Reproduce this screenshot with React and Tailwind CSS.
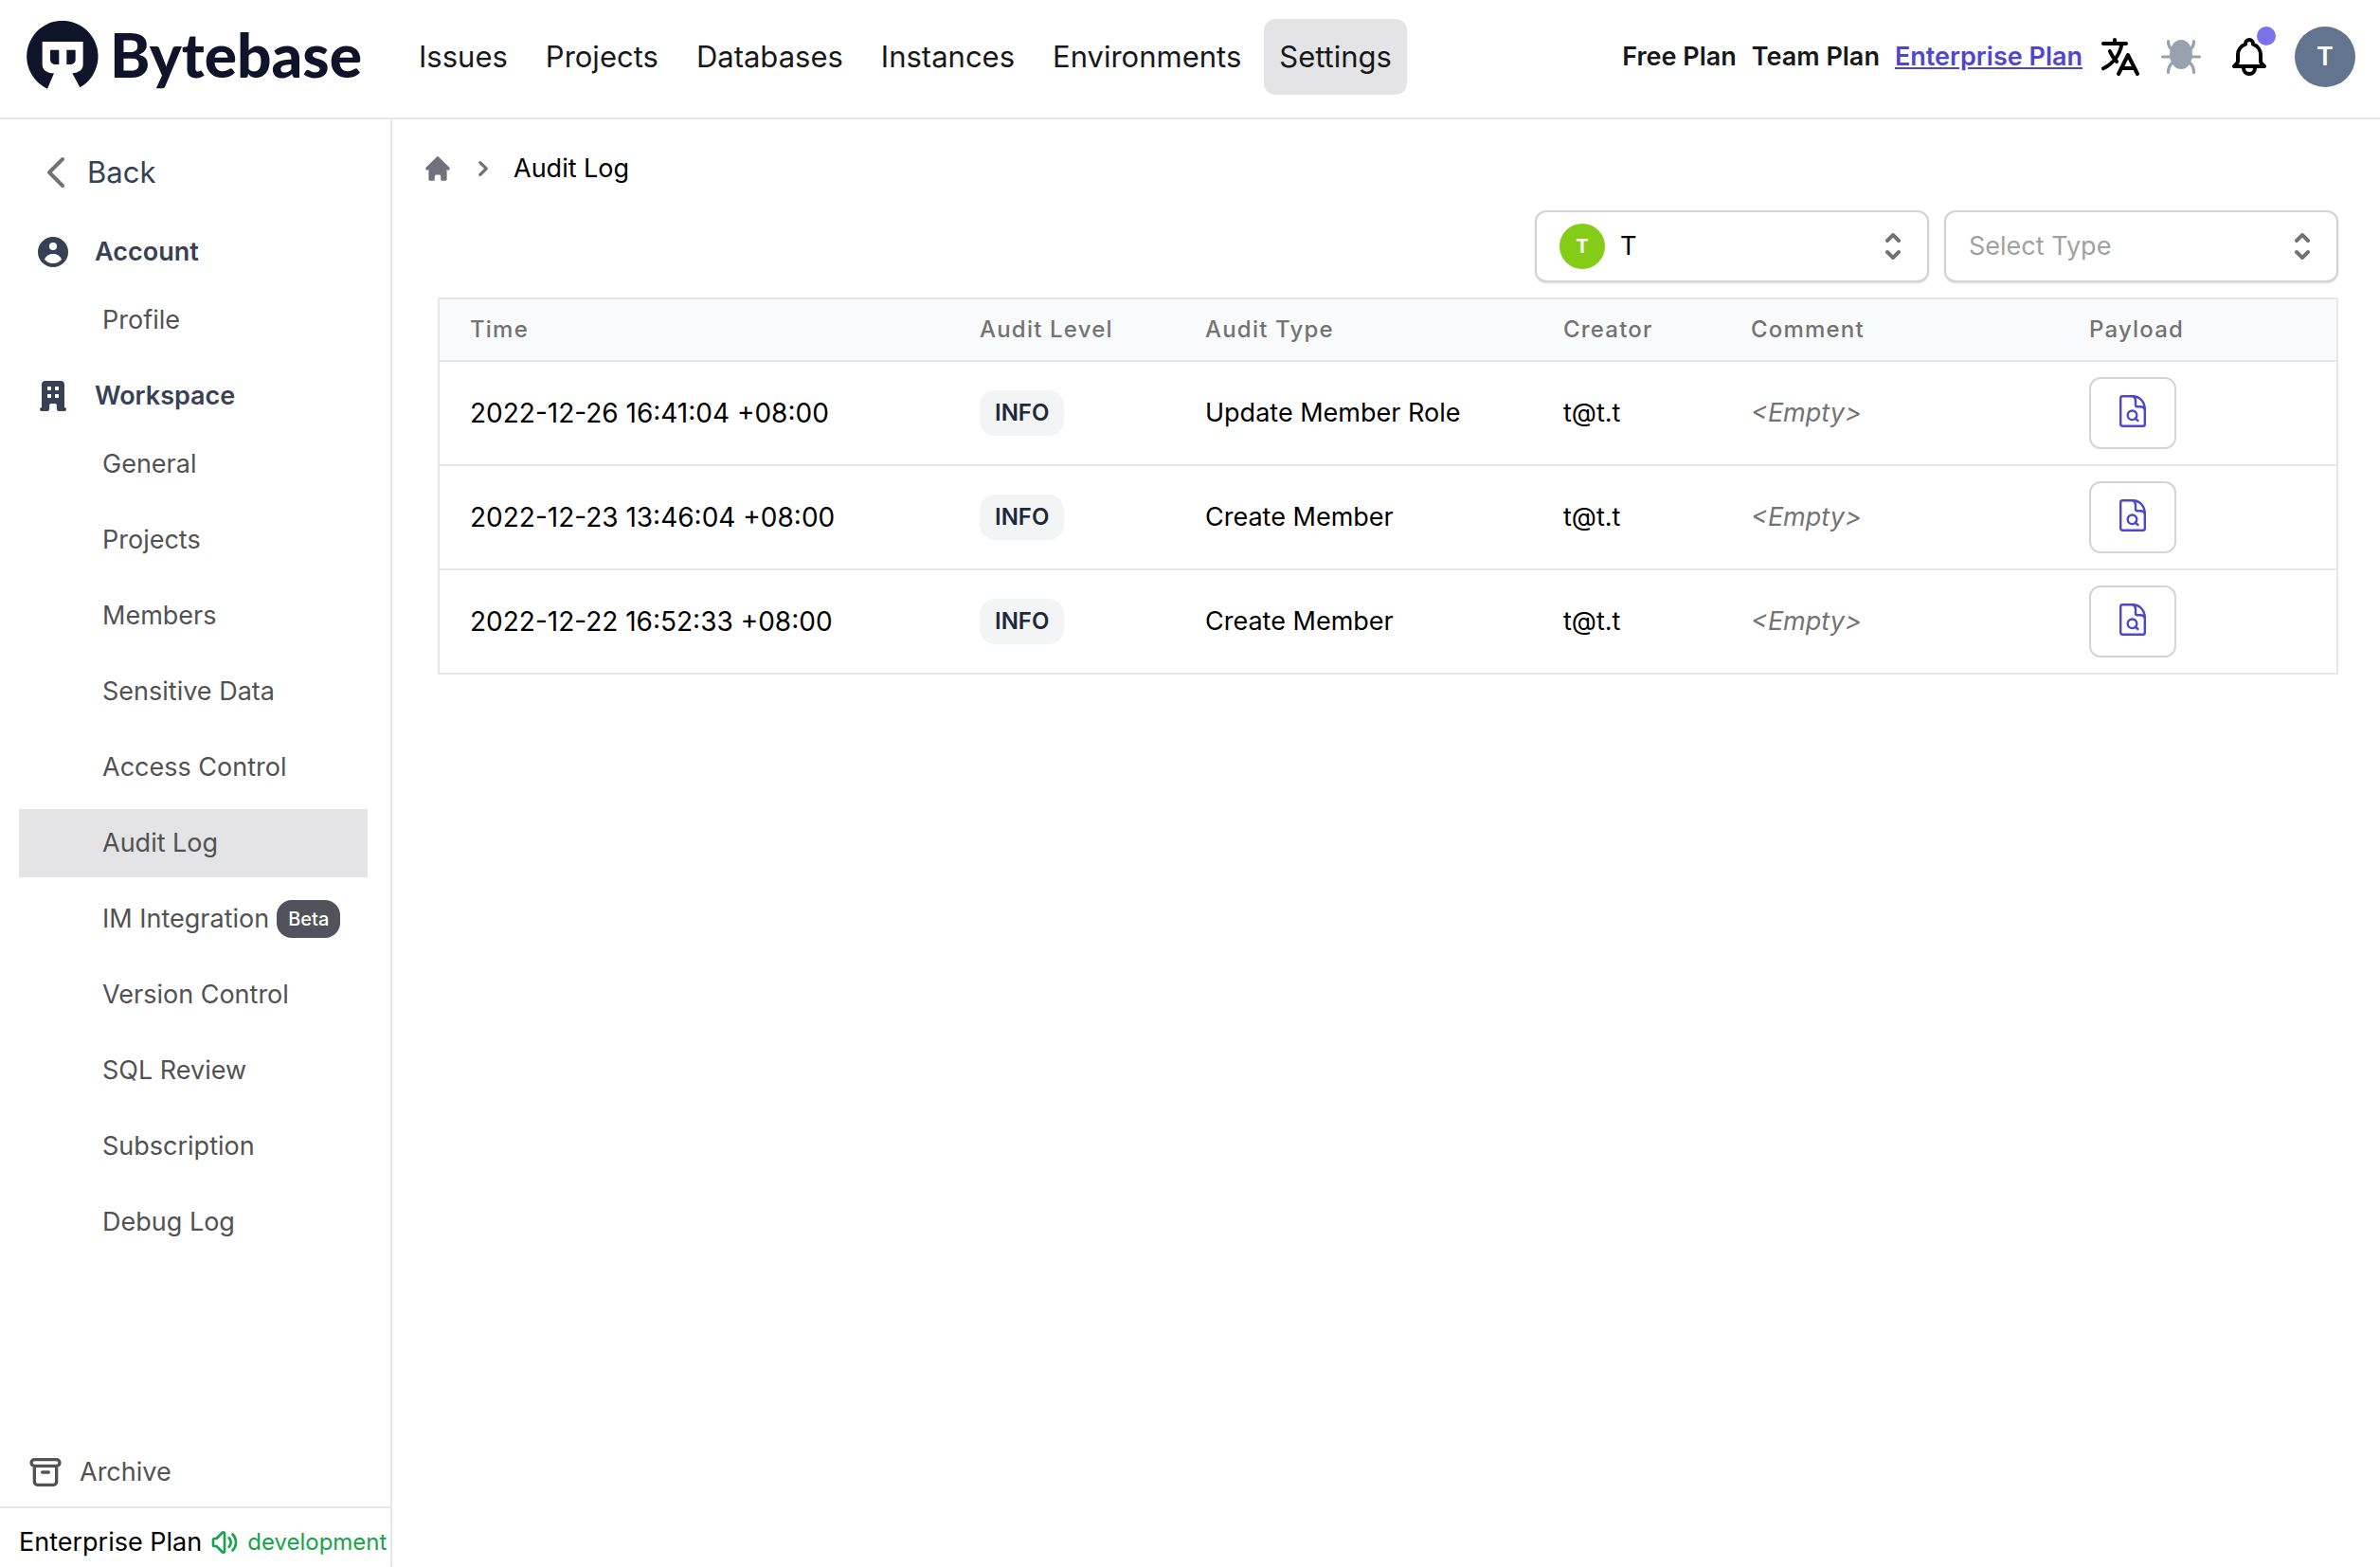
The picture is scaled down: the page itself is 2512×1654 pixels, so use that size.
import React, { useState } from "react";
import {
  HiChevronRight,
  HiHome,
  HiOfficeBuilding,
  HiOutlineArchive,
  HiOutlineBell,
  HiOutlineChevronLeft,
  HiOutlineTranslate,
  HiOutlineVolumeUp,
  HiSelector,
  HiUserCircle,
} from "react-icons/hi";

const navLinks = [
  "Issues",
  "Projects",
  "Databases",
  "Instances",
  "Environments",
  "Settings",
];

const plans = ["Free Plan", "Team Plan", "Enterprise Plan"];

const sections = [
  { title: "Account", icon: HiUserCircle, items: [{ name: "Profile" }] },
  {
    title: "Workspace",
    icon: HiOfficeBuilding,
    items: [
      { name: "General" },
      { name: "Projects" },
      { name: "Members" },
      { name: "Sensitive Data" },
      { name: "Access Control" },
      { name: "Audit Log" },
      { name: "IM Integration", beta: true },
      { name: "Version Control" },
      { name: "SQL Review" },
      { name: "Subscription" },
      { name: "Debug Log" },
    ],
  },
];

const columns = [
  { name: "Time", width: "w-[538px]" },
  { name: "Audit Level", width: "w-[238px]" },
  { name: "Audit Type", width: "w-[378px]" },
  { name: "Creator", width: "w-[198px]" },
  { name: "Comment", width: "w-[357px]" },
  { name: "Payload", width: "w-[293px]" },
];

const logs = [
  { time: "2022-12-26 16:41:04 +08:00", level: "INFO", type: "Update Member Role", creator: "t@t.t" },
  { time: "2022-12-23 13:46:04 +08:00", level: "INFO", type: "Create Member", creator: "t@t.t" },
  { time: "2022-12-22 16:52:33 +08:00", level: "INFO", type: "Create Member", creator: "t@t.t" },
];

const Logo = () => (
  <a href="#" className="flex items-center gap-3 pb-1 text-[#10142a]">
    <svg className="h-18 w-19" viewBox="0 0 226 216" fill="currentColor" aria-hidden="true">
      <path d="M65 215A113 113 0 1 1 168 211L144 166C165 164 178 155 178 138V66H49V138C49 155 62 166 86 166Z" />
      <path d="M74 92h28v46H92c-10 0-18-6-18-16z" />
      <path d="M126 92h28v30c0 10-8 16-18 16h-10z" />
    </svg>
    <span className="font-[Lato,sans-serif] text-[64px] leading-18 font-black">Bytebase</span>
  </a>
);

const BugIcon = () => (
  <svg className="size-12 text-gray-400" viewBox="0 0 48 48" fill="none" stroke="currentColor" strokeWidth="3.2" strokeLinecap="round">
    <ellipse cx="24" cy="21.500" rx="12" ry="15.500" fill="currentColor" stroke="none" />
    <path d="M4.500 24H43.500M10.500 7.500c0 4 1 7 4.500 9.500M37.500 7.500c0 4-1 7-4.500 9.500M10.500 40.500c0-5 1.500-8 5-11M37.500 40.500c0-5-1.500-8-5-11" />
  </svg>
);

const PayloadIcon = () => (
  <svg className="h-[34px] w-7" viewBox="0 0 28 34" fill="none" stroke="currentColor" strokeWidth="2.4" strokeLinecap="round" strokeLinejoin="round">
    <path d="M3 1.200H14C21.500 1.200 26.800 7.500 26.800 15V30.800a2 2 0 0 1-2 2H3.200a2 2 0 0 1-2-2V3a2 2 0 0 1 2-1.800Z" />
    <path d="M14 1.200c2 .8 3 2.500 3 5v4a2 2 0 0 0 2 2h3c2.500 0 4.300 1 4.800 3" />
    <circle cx="13.500" cy="21.300" r="4.800" />
    <path d="M16.500 24.500l3 2.500" />
  </svg>
);

const Header = () => (
  <header className="flex items-center justify-between border-b-2 border-gray-200 pt-5 pr-[26px] pb-6 pl-7">
    <div className="flex items-center gap-11">
      <Logo />
      <nav className="flex items-center gap-2">
        {navLinks.map((link) => (
          <a
            key={link}
            href="#"
            className={`rounded-xl px-4 py-5 text-[31px] leading-10 text-zinc-900 ${
              link === "Settings" ? "bg-zinc-200" : ""
            }`}
          >
            {link}
          </a>
        ))}
      </nav>
    </div>
    <div className="flex items-center gap-6">
      <div className="flex items-center gap-4 text-[27px] leading-10 font-semibold text-zinc-900">
        {plans.map((plan) => (
          <a
            key={plan}
            href="#"
            className={plan === "Enterprise Plan" ? "text-[#4f46cd] underline" : ""}
          >
            {plan}
          </a>
        ))}
        <button aria-label="Language" className="text-black">
          <HiOutlineTranslate className="size-12" />
        </button>
        <button aria-label="Debug">
          <BugIcon />
        </button>
      </div>
      <button aria-label="Notifications" className="relative">
        <HiOutlineBell className="size-12" />
        <span className="absolute -top-2 -right-1 size-5 rounded-full bg-[#7b72e9]" />
      </button>
      <button className="size-16 rounded-full bg-slate-500 text-[27px] font-semibold text-white">
        T
      </button>
    </div>
  </header>
);

const Sidebar = () => (
  <aside className="flex w-[414px] shrink-0 flex-col overflow-hidden border-r-2 border-gray-200">
    <div className="flex-1 pt-8">
      <a href="#" className="mb-8 ml-9 flex items-center gap-2 text-[31px] leading-12 text-gray-700">
        <HiOutlineChevronLeft className="size-12 text-neutral-500" />
        Back
      </a>
      <nav className="flex flex-col gap-4">
        {sections.map((section) => (
          <div key={section.title} className="flex flex-col gap-2">
            <div className="flex h-14 items-center gap-6 pl-9 text-[27px] font-semibold text-gray-700">
              <section.icon className="size-10" />
              {section.title}
            </div>
            {section.items.map((item) => (
              <a
                key={item.name}
                href="#"
                className={`mr-6 ml-5 flex h-18 items-center gap-2 pl-22 text-[27px] text-neutral-600 ${
                  item.name === "Audit Log" ? "bg-zinc-200" : ""
                }`}
              >
                {item.name}
                {item.beta && (
                  <span className="rounded-2xl bg-zinc-600 px-3 text-xl leading-10 font-medium text-white">
                    Beta
                  </span>
                )}
              </a>
            ))}
          </div>
        ))}
      </nav>
    </div>
    <a href="#" className="mb-4 ml-7 flex items-center gap-4 text-[27px] leading-10 text-neutral-600">
      <HiOutlineArchive className="size-10" />
      Archive
    </a>
    <div className="flex items-center gap-2 border-t-2 border-gray-200 pt-4 pb-1.5 pl-5 text-[27px] leading-10 whitespace-nowrap">
      <a href="#">Enterprise Plan</a>
      <span className="flex items-center gap-2 text-2xl text-[#16a34a]">
        <HiOutlineVolumeUp className="size-8 shrink-0" />
        development
      </span>
    </div>
  </aside>
);

const Filters = () => (
  <div className="mt-6 flex justify-end gap-4">
    <div className="relative w-[416px]">
      <select
        aria-label="Creator"
        className="h-19 w-full appearance-none rounded-xl border-2 border-zinc-300 bg-white pr-16 pl-[88px] text-[27px] shadow-sm"
      >
        <option>T</option>
      </select>
      <span className="pointer-events-none absolute top-3.5 left-[26px] flex size-12 items-center justify-center rounded-full bg-[#84cc16] text-xl font-bold text-white">
        T
      </span>
      <HiSelector className="pointer-events-none absolute top-4.5 right-4.5 size-10 text-neutral-500" />
    </div>
    <div className="relative w-[416px]">
      <select
        aria-label="Type"
        className="h-19 w-full appearance-none rounded-xl border-2 border-zinc-300 bg-white pr-16 pl-6 text-[27px] text-neutral-400 shadow-sm"
      >
        <option>Select Type</option>
      </select>
      <HiSelector className="pointer-events-none absolute top-4.5 right-4.5 size-10 text-neutral-500" />
    </div>
  </div>
);

const AuditTable = () => (
  <div className="mt-4 border-2 border-gray-200">
    <table className="w-full text-left text-[27px]">
      <thead className="bg-gray-50">
        <tr>
          {columns.map((column) => (
            <th
              key={column.name}
              className={`${column.width} py-4 pl-8 text-2xl leading-8 font-medium tracking-wider text-neutral-500`}
            >
              {column.name}
            </th>
          ))}
        </tr>
      </thead>
      <tbody>
        {logs.map((log) => (
          <tr key={log.time} className="border-t-2 border-gray-200">
            <td className="py-4 pl-8 text-[28px]">{log.time}</td>
            <td className="py-4 pl-8">
              <span className="inline-block rounded-2xl bg-gray-100 px-4 text-2xl leading-12 font-semibold text-gray-800">
                {log.level}
              </span>
            </td>
            <td className="py-4 pl-8">{log.type}</td>
            <td className="py-4 pl-8">{log.creator}</td>
            <td className="py-4 pl-8 text-neutral-500 italic">&lt;Empty&gt;</td>
            <td className="py-4 pl-8">
              <button
                aria-label="View payload"
                className="flex h-19 w-23 items-center justify-center rounded-xl border-2 border-zinc-300 pb-1 text-[#4f46cd]"
              >
                <PayloadIcon />
              </button>
            </td>
          </tr>
        ))}
      </tbody>
    </table>
  </div>
);

const App = () => {
  const [page] = useState("Audit Log");

  return (
    <div className="flex min-h-screen flex-col bg-white font-[Inter,sans-serif] text-black">
      <Header />
      <div className="flex flex-1">
        <Sidebar />
        <main className="min-w-0 flex-1 pt-8 pr-11 pl-12">
          <div className="-ml-4 flex items-center gap-4 text-[27px] leading-10">
            <a href="#" aria-label="Home">
              <HiHome className="size-8 text-zinc-500" />
            </a>
            <HiChevronRight className="size-8 text-zinc-500" />
            {page}
          </div>
          <Filters />
          <AuditTable />
        </main>
      </div>
    </div>
  );
};

export default App;
